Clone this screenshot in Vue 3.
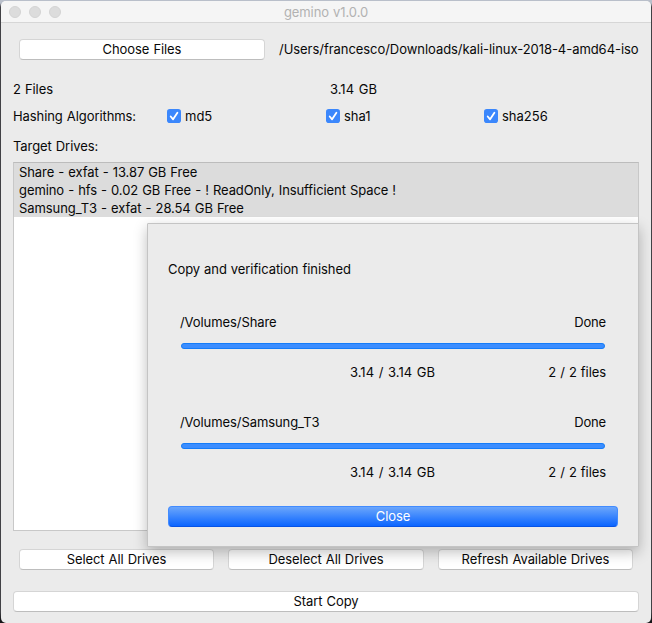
<script setup>
const algorithms = ['md5', 'sha1', 'sha256']
const drives = [
  'Share - exfat - 13.87 GB Free',
  'gemino - hfs - 0.02 GB Free - ! ReadOnly, Insufficient Space !',
  'Samsung_T3 - exfat - 28.54 GB Free',
]
const actions = ['Select All Drives', 'Deselect All Drives', 'Refresh Available Drives']
const jobs = [
  { path: '/Volumes/Share', percent: 100 },
  { path: '/Volumes/Samsung_T3', percent: 100 },
]
</script>

<template>
  <div class="desktop">
    <main class="window">
      <header class="titlebar">
        <div class="lights"><i></i><i></i><i></i></div>
        <span class="title">gemino v1.0.0</span>
      </header>

      <section class="source">
        <button class="btn choose">Choose Files</button>
        <span class="path">/Users/francesco/Downloads/kali-linux-2018-4-amd64-iso</span>
      </section>

      <section class="summary">
        <span>2 Files</span>
        <span class="size">3.14 GB</span>
      </section>

      <section class="hashes">
        <span>Hashing Algorithms:</span>
        <label v-for="name in algorithms" :key="name" class="check">
          <svg width="14" height="14" viewBox="0 0 14 14">
            <rect width="14" height="14" rx="2.8" fill="#3b87fc" />
            <path d="M3.7 7.5 6.1 10.3 10.4 3.7" fill="none" stroke="#fff" stroke-width="1.8" stroke-linecap="round" stroke-linejoin="round" />
          </svg>
          <span>{{ name }}</span>
        </label>
      </section>

      <div class="label">Target Drives:</div>
      <ul class="drives">
        <li v-for="drive in drives" :key="drive">{{ drive }}</li>
      </ul>

      <section class="actions">
        <button v-for="action in actions" :key="action" class="btn">{{ action }}</button>
      </section>
      <button class="btn start">Start Copy</button>
    </main>

    <div class="dialog-clip">
      <section class="dialog">
        <h1>Copy and verification finished</h1>
        <article v-for="job in jobs" :key="job.path" class="job">
          <div class="line"><span>{{ job.path }}</span><span class="status">Done</span></div>
          <div class="track"><div class="bar" :style="{ width: job.percent + '%' }"></div></div>
          <div class="line counts"><span class="size">3.14 / 3.14 GB</span><span>2 / 2 files</span></div>
        </article>
        <button class="close">Close</button>
      </section>
    </div>
  </div>
</template>

<style>
body {
  margin: 0;
  overflow: hidden;
}
</style>

<style scoped>
.desktop {
  position: relative;
  box-sizing: border-box;
  width: 652px;
  height: 623px;
  padding: 1px 1px 0;
  background: linear-gradient(#b9bfca 0, #b9bfca 3px, #414145 7px, #414145 612px, #151517 620px);
  font: 13px/18px Inter, "Liberation Sans", sans-serif;
  letter-spacing: -0.08px;
  word-spacing: 0.5px;
  color: #080808;
}
.window {
  display: flex;
  flex-direction: column;
  box-sizing: border-box;
  height: 622px;
  overflow: hidden;
  border-radius: 5px;
  background: #ebebeb;
}
.titlebar {
  display: grid;
  grid-template-columns: 70px 1fr 70px;
  align-items: center;
  height: 21px;
  border-bottom: 1px solid #d6d6d6;
  background: #f5f5f5;
}
.lights {
  display: flex;
  gap: 8px;
  padding-left: 8px;
}
.lights i {
  box-sizing: border-box;
  width: 12px;
  height: 12px;
  border: 1px solid #d3d3d3;
  border-radius: 50%;
  background: #dcdcdc;
}
.title {
  text-align: center;
  color: #b2b2b2;
}
button {
  margin: 0;
  padding: 0;
  border: 0;
  font: inherit;
  letter-spacing: inherit;
  word-spacing: inherit;
  color: inherit;
}
.btn {
  box-sizing: border-box;
  height: 21px;
  border: 1px solid #d5d5d5;
  border-bottom-color: #bdbdbd;
  border-radius: 4px;
  background: #fff;
  line-height: 19px;
}
.source {
  display: flex;
  align-items: flex-start;
  height: 21px;
  margin: 16px 12px 0 18px;
}
.choose {
  flex: none;
  width: 246px;
}
.path {
  margin: 1px 0 0 14px;
  letter-spacing: -0.05px;
  white-space: nowrap;
}
.summary {
  display: grid;
  grid-template-columns: 317px 1fr;
  margin: 20px 12px 0;
}
.size {
  letter-spacing: 0;
  word-spacing: 1px;
}
.hashes {
  display: grid;
  grid-template-columns: 154px 159px 158px 1fr;
  margin: 9px 12px 0;
}
.check {
  display: flex;
  align-items: center;
  gap: 4px;
  letter-spacing: 0;
}
.label {
  margin: 12px 12px 0;
}
.drives {
  box-sizing: border-box;
  height: 369px;
  margin: 7px 12px 0;
  padding: 0;
  border: 1px solid #c8c8c8;
  border-top-color: #bcbcbc;
  background: #fff;
  list-style: none;
}
.drives li {
  height: 18px;
  padding-left: 5px;
  background: #dcdcdc;
}
.actions {
  display: grid;
  grid-template-columns: 195px 196px 195px;
  gap: 14px;
  margin: 18px 18px 0;
}
.start {
  margin: 21px 12px 0;
}
/* The sheet's shadow stays inside the window frame. */
.dialog-clip {
  position: absolute;
  inset: 216px 1px 0 1px;
  overflow: hidden;
}
.dialog {
  position: absolute;
  left: 146px;
  top: 7px;
  box-sizing: border-box;
  width: 492px;
  height: 324px;
  padding: 36px 20px 0;
  border: 1px solid #c4c4c4;
  border-radius: 1px;
  background: #ebebeb;
  box-shadow: 0 5px 14px rgba(0, 0, 0, 0.26);
}
h1 {
  margin: 0 0 35px;
  font: inherit;
}
.job {
  height: 68px;
  margin: 0 12px 32px;
}
.job:last-of-type {
  margin-bottom: 25px;
}
.line {
  display: flex;
  justify-content: space-between;
}
.status {
  letter-spacing: -0.15px;
}
.track {
  box-sizing: border-box;
  height: 6px;
  margin: 12px 1px 14px;
  border-radius: 3px;
  background: #d8d8d8;
}
.bar {
  box-sizing: border-box;
  height: 100%;
  border: 1px solid #147cf9;
  border-radius: 3px;
  background: #3b8dff;
}
.counts {
  padding-left: 170px;
}
.close {
  display: block;
  box-sizing: border-box;
  width: 450px;
  height: 21px;
  border: 1px solid #428bff;
  border-bottom-color: #0753e5;
  border-radius: 4px;
  background: linear-gradient(#6ba6fb, #0b65ff);
  color: #fff;
  line-height: 19px;
}
</style>
